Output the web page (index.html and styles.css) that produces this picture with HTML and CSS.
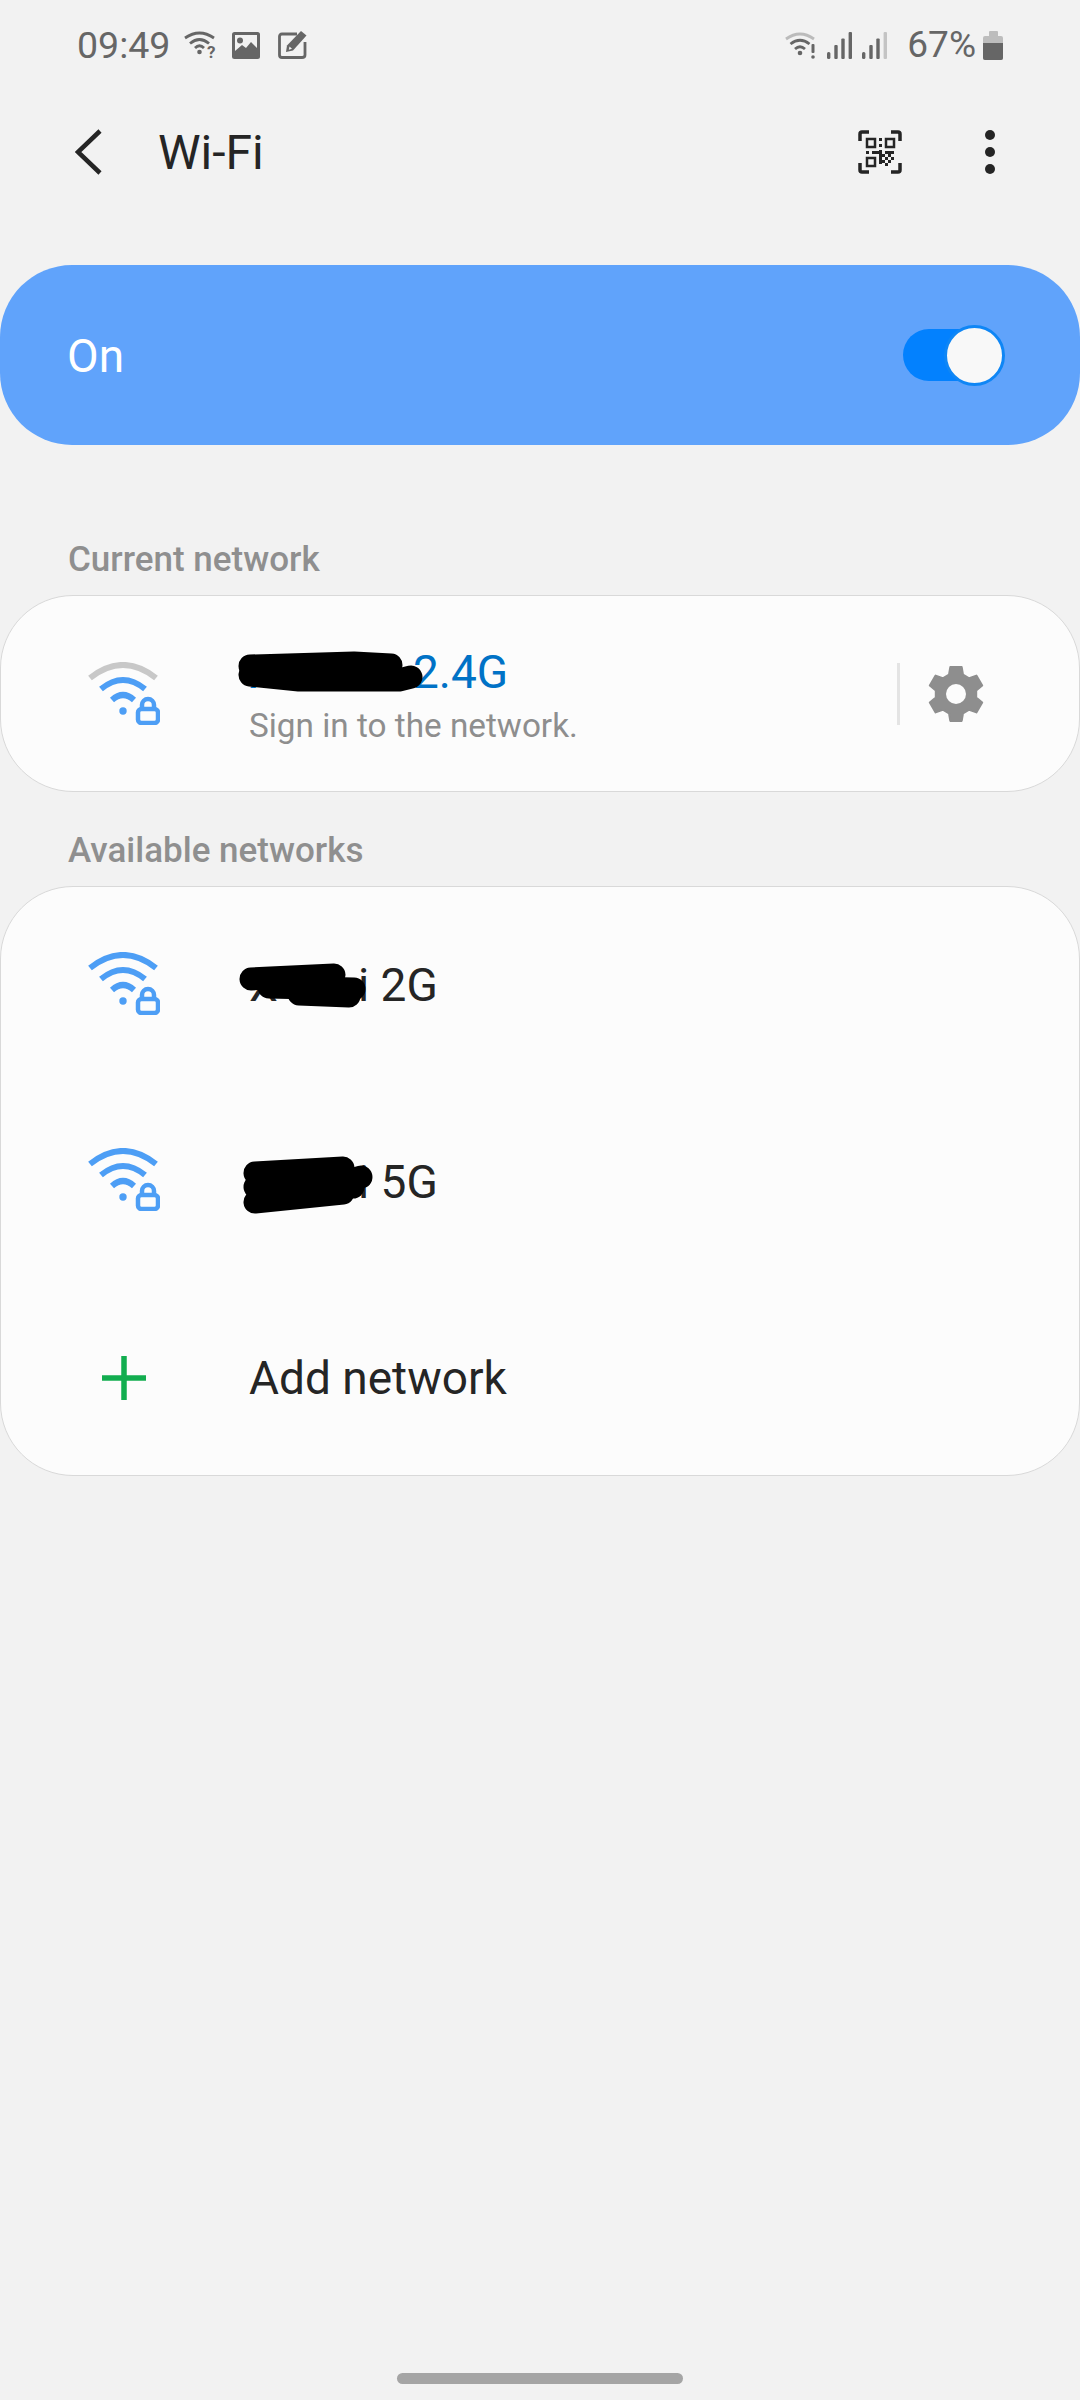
FILE: index.html
```html
<!DOCTYPE html>
<html lang="en">
<head>
    <meta charset="UTF-8">
    <meta name="viewport" content="width=device-width, initial-scale=1.0">
    <title>Wi-Fi</title>
    <link rel="stylesheet" href="styles.css">
</head>
<body>
    <svg class="defs" width="0" height="0" aria-hidden="true">
        <defs>
            <g id="wifi-inner">
                <path class="arc" d="M13 27 Q35 9 57 27"/>
                <path class="arc" d="M24 38 Q35 28 46 38"/>
                <circle class="dot" cx="35" cy="49" r="3.7"/>
                <rect class="lock" x="50" y="47" width="20" height="14" rx="3.5"/>
                <path class="shackle" d="M54 47 v-4 a6 6 0 0 1 12 0 v4"/>
            </g>
        </defs>
    </svg>

    <div class="status-bar">
        <span class="status-text time">09:49</span>
        <svg class="st-wifi-q" width="32" height="28" viewBox="0 0 32 28">
            <path class="st-line" d="M1 7 Q15.5 -3 30 7"/>
            <path class="st-line" d="M6 12.5 Q15.5 4.5 25 12.5"/>
            <path class="st-line" d="M11 17 Q15.5 12.500 20 17"/>
            <circle class="st-fill" cx="15.500" cy="21" r="2.300"/>
            <text class="st-mark" x="23" y="27">?</text>
        </svg>
        <svg class="st-image" width="28" height="27" viewBox="0 0 28 27">
            <rect class="st-fill" width="28" height="27" rx="2.500"/>
            <rect class="st-hole" x="3" y="3" width="22" height="18"/>
            <circle class="st-fill" cx="8" cy="8.500" r="3"/>
            <path class="st-fill" d="M3 19 L10 13 L14 16 L19 10 L25 16 V24 H3 Z"/>
        </svg>
        <svg class="st-edit" width="29" height="28" viewBox="0 0 29 28">
            <path class="st-line" d="M19 3 H4 Q1.500 3 1.500 5.500 V24 Q1.500 26.500 4 26.500 H24 Q27 26.500 27 24 V11"/>
            <path class="st-fill" d="M23 0 L28.500 4.500 L15 19.500 L8 21 L9 14.500 Z"/>
            <path class="st-hole" d="M11.500 15.500 L14 17.800 L10.800 18.700 Z"/>
        </svg>

        <div class="status-right">
            <svg class="st-wifi-x" width="31" height="27" viewBox="0 0 31 27">
                <path class="st-line st-light" d="M1 7 Q15 -3 29 7"/>
                <path class="st-line" d="M5.500 12 Q15 4.500 24.500 12"/>
                <path class="st-line" d="M10 17 Q15 12.500 20 17"/>
                <circle class="st-fill" cx="15" cy="21" r="2.300"/>
                <rect class="st-fill" x="26.500" y="12" width="3" height="9" rx="1"/>
                <circle class="st-fill" cx="28" cy="25" r="1.800"/>
            </svg>
            <svg class="st-signal" width="25" height="27" viewBox="0 0 25 27">
                <rect class="st-fill" x="0" y="20" width="3.400" height="7" rx="1.500"/>
                <rect class="st-fill" x="7.300" y="13" width="3.400" height="14" rx="1"/>
                <rect class="st-fill" x="14.300" y="6.500" width="3.400" height="20.500" rx="1"/>
                <rect class="st-fill" x="21.600" y="0" width="3.400" height="27" rx="1"/>
            </svg>
            <svg class="st-signal-2" width="25" height="27" viewBox="0 0 25 27">
                <rect class="st-fill" x="0" y="20" width="3.400" height="7" rx="1.500"/>
                <rect class="st-fill" x="7.300" y="13" width="3.400" height="14" rx="1"/>
                <rect class="st-fill" x="14.300" y="6.500" width="3.400" height="20.500" rx="1"/>
                <rect class="st-dim" x="21.600" y="0" width="3.400" height="27" rx="1"/>
            </svg>
            <span class="status-text percent">67%</span>
            <div class="battery">
                <div class="battery-cap"></div>
                <div class="battery-body"><div class="battery-level"></div></div>
            </div>
        </div>
    </div>

    <header class="app-bar">
        <svg class="back-icon" width="28" height="46" viewBox="0 0 28 46">
            <path d="M25 2 L3 23 L25 44"/>
        </svg>
        <h1 class="title">Wi-Fi</h1>
        <svg class="qr-icon" width="44" height="44" viewBox="0 0 44 44">
            <path class="qr-corner" d="M2 11 V4 Q2 2 4 2 H11 M33 2 H40 Q42 2 42 4 V11 M2 33 V40 Q2 42 4 42 H11 M33 42 H40 Q42 42 42 40 V33"/>
            <rect class="qr-box" x="9" y="9" width="8" height="8"/>
            <rect class="qr-box" x="28" y="9" width="8" height="8"/>
            <rect class="qr-box" x="9" y="28" width="8" height="8"/>
            <path class="qr-bits" d="M21 8h3v3h-3z M21 14h3v3h-3z M8 21h3v3h-3z M14 21h7v3h-7z M21 20h3v14h-3z M27 21h9v3h-9z M24 24h3v3h-3z M27 27h3v3h-3z M30 24h3v3h-3z M33 27h3v3h-3z M24 30h3v3h-3z M30 30h3v3h-3z M27 33h3v3h-3z"/>
        </svg>
        <div class="more-icon"><span></span><span></span><span></span></div>
    </header>

    <section class="master-switch">
        <span class="master-label">On</span>
        <div class="toggle">
            <div class="toggle-track"></div>
            <div class="toggle-knob"></div>
        </div>
    </section>

    <h2 class="section-title first">Current network</h2>
    <section class="card">
        <div class="row current">
            <div class="row-icon">
                <svg class="wifi" width="72" height="63" viewBox="0 0 72 63">
                    <path class="arc-off" d="M2 16 Q35 -10 68 16"/>
                    <use href="#wifi-inner"/>
                </svg>
            </div>
            <div class="row-text">
                <div class="ssid ssid-active"><span class="masked gap-current">X</span>2.4G
                    <svg class="scribble scribble-current" width="186" height="41" viewBox="0 0 186 41">
                        <path d="M11 13 L115 10 L152 12"/>
                        <path d="M11 22 L60 27 L160 27 L172 24"/>
                    </svg>
                </div>
                <div class="sub">Sign in to the network.</div>
            </div>
            <div class="divider"></div>
            <svg class="gear" width="58" height="58" viewBox="-29 -29 58 58">
                <path class="gear-body" d="M-7 -19.300 L-5.700 -26.900 L5.700 -26.900 L7 -19.300 L13.200 -15.700 L20.400 -18.400 L26.200 -8.500 L20.200 -3.600 L20.200 3.600 L26.200 8.500 L20.400 18.400 L13.200 15.700 L7 19.300 L5.700 26.900 L-5.700 26.900 L-7 19.300 L-13.200 15.700 L-20.400 18.400 L-26.200 8.500 L-20.200 3.600 L-20.200 -3.600 L-26.200 -8.500 L-20.400 -18.400 L-13.200 -15.700 Z"/>
                <circle class="gear-hole" r="10"/>
            </svg>
        </div>
    </section>

    <h2 class="section-title second">Available networks</h2>
    <section class="card">
        <div class="row">
            <div class="row-icon">
                <svg class="wifi wifi-list" width="72" height="63" viewBox="0 0 72 63">
                    <path class="arc" d="M2 16 Q35 -10 68 16"/>
                    <use href="#wifi-inner"/>
                </svg>
            </div>
            <div class="ssid"><span class="masked gap-2g">X</span>i 2G
                <svg class="scribble scribble-2g" width="130" height="49" viewBox="0 0 130 49">
                    <path d="M12 17 L95 13"/>
                    <path d="M30 25 L115 27"/>
                    <path d="M60 32 L110 34"/>
                </svg>
            </div>
        </div>
        <div class="row">
            <div class="row-icon">
                <svg class="wifi wifi-list" width="72" height="63" viewBox="0 0 72 63">
                    <path class="arc" d="M2 16 Q35 -10 68 16"/>
                    <use href="#wifi-inner"/>
                </svg>
            </div>
            <div class="ssid"><span class="masked gap-5g">X</span>i 5G
                <svg class="scribble scribble-5g" width="135" height="61" viewBox="0 0 135 61">
                    <path d="M12 16 L100 11"/>
                    <path d="M118 20 L100 25"/>
                    <path d="M12 30 L110 30"/>
                    <path d="M12 45 L100 36"/>
                </svg>
            </div>
        </div>
        <div class="row add">
            <div class="row-icon">
                <svg class="plus" width="44" height="44" viewBox="0 0 44 44">
                    <path d="M22 0 V44 M0 22 H44"/>
                </svg>
            </div>
            <div class="ssid">Add network</div>
        </div>
    </section>

    <div class="home-bar"></div>
</body>
</html>
```

FILE: styles.css
```css
body {
    font-family: Roboto, "Noto Sans", sans-serif;
    background-color: #f2f2f2;
    margin: 0;
    width: 1080px;
    height: 2400px;
    display: flex;
    flex-direction: column;
    color: #252525;
    overflow: hidden;
}

.defs {
    position: absolute;
}

/* status bar */
.status-bar {
    display: flex;
    align-items: center;
    height: 48px;
    margin-top: 21px;
    padding: 0 77px;
}

.status-text {
    font-size: 37.500px;
    line-height: 48px;
    color: #666;
}

.st-wifi-q {
    margin-left: 14px;
    overflow: visible;
}

.st-image {
    margin-left: 16px;
}

.st-edit {
    margin-left: 18px;
}

.status-right {
    display: flex;
    align-items: center;
    margin-left: auto;
}

.st-signal {
    margin-left: 11px;
}

.st-signal-2 {
    margin-left: 10px;
}

.percent {
    margin-left: 20px;
    font-size: 37px;
}

.st-line {
    fill: none;
    stroke: #666;
    stroke-width: 2.8;
}

.st-light {
    stroke: #bbb;
}

.st-fill {
    fill: #666;
}

.st-dim {
    fill: #c4c4c4;
}

.st-hole {
    fill: #f2f2f2;
}

.st-mark {
    font-family: Roboto, sans-serif;
    font-size: 17px;
    font-weight: 700;
    fill: #666;
}

.battery {
    display: flex;
    flex-direction: column;
    align-items: center;
    width: 20px;
    margin-left: 7px;
}

.battery-cap {
    width: 9px;
    height: 5px;
    background: #bdbdbd;
    border-radius: 1px 1px 0 0;
}

.battery-body {
    display: flex;
    align-items: flex-end;
    width: 20px;
    height: 24px;
    background: #bdbdbd;
    border-radius: 2px;
}

.battery-level {
    width: 100%;
    height: 17px;
    background: #666;
    border-radius: 0 0 2px 2px;
}

/* app bar */
.app-bar {
    display: flex;
    align-items: center;
    height: 88px;
    margin-top: 39px;
    padding-left: 75px;
}

.back-icon path {
    fill: none;
    stroke: #252525;
    stroke-width: 4.500;
}

.title {
    margin: 0 0 0 55px;
    font-size: 48px;
    font-weight: 400;
}

.qr-icon {
    margin-left: auto;
}

.qr-corner,
.qr-box {
    fill: none;
    stroke: #252525;
    stroke-width: 3.500;
}

.qr-box {
    stroke-width: 2.500;
}

.qr-bits {
    fill: #252525;
}

.more-icon {
    display: flex;
    flex-direction: column;
    gap: 7px;
    margin: 0 85px 0 83px;
}

.more-icon span {
    width: 10px;
    height: 10px;
    background: #252525;
    border-radius: 50%;
}

/* on/off card */
.master-switch {
    display: flex;
    align-items: center;
    justify-content: space-between;
    height: 180px;
    margin-top: 69px;
    padding: 0 75px 0 67px;
    background: #60a3fb;
    border-radius: 72px;
}

.master-label {
    position: relative;
    top: 1px;
    font-size: 46px;
    color: #fff;
}

.toggle {
    position: relative;
    width: 102px;
    height: 61px;
    display: flex;
    align-items: center;
}

.toggle-track {
    width: 90px;
    height: 52px;
    background: #0381fe;
    border-radius: 26px;
}

.toggle-knob {
    position: absolute;
    right: 0;
    top: 0;
    width: 61px;
    height: 61px;
    box-sizing: border-box;
    background: #f8f8f8;
    border: 3px solid #0f86f5;
    border-radius: 50%;
}

/* lists */
.section-title {
    margin: 0;
    padding-left: 68px;
    font-size: 35px;
    line-height: 40px;
    font-weight: 500;
    color: #8f8f8f;
}

.section-title.first {
    margin-top: 95px;
    margin-bottom: 15px;
}

.section-title.second {
    margin-top: 39px;
    margin-bottom: 15px;
}

.card {
    background: #fcfcfc;
    border: 1px solid #d9d9d9;
    border-radius: 73px;
}

.row {
    display: flex;
    align-items: center;
    height: 196.500px;
}

.row.current {
    height: 195px;
}

.row.add {
    height: 195px;
}

.row-icon {
    display: flex;
    justify-content: center;
    width: 72px;
    margin-left: 87px;
    margin-right: 89px;
}

.wifi-list {
    margin-bottom: 4px;
}

.ssid {
    position: relative;
    font-size: 46px;
    line-height: 52px;
    white-space: nowrap;
}

.ssid-active {
    color: #0072c6;
}

.masked {
    display: inline-block;
}

.gap-current {
    width: 164px;
}

.gap-2g {
    width: 109px;
}

.gap-5g {
    width: 109px;
}

/* marker strokes drawn over the network names */
.scribble {
    position: absolute;
    overflow: visible;
}

.scribble path {
    fill: none;
    stroke: #000;
    stroke-width: 23;
    stroke-linecap: round;
    stroke-linejoin: round;
}

.scribble-current {
    left: -10px;
    top: 7px;
}

.scribble-2g {
    left: -10px;
    top: 3px;
}

.scribble-5g {
    left: -6px;
    top: 1px;
}

.row-text {
    display: flex;
    flex-direction: column;
    flex: 1;
    padding-top: 8px;
}

.sub {
    margin-top: 5px;
    font-size: 33.300px;
    line-height: 46px;
    color: #8e8e8e;
}

.divider {
    width: 3px;
    height: 62px;
    background: #e4e4e4;
}

.gear {
    margin: 0 94px 0 27px;
}

.gear-body {
    fill: #8e8e8e;
    stroke: #8e8e8e;
    stroke-width: 2;
    stroke-linejoin: round;
}

.gear-hole {
    fill: #fcfcfc;
}

.arc,
.arc-off,
.shackle {
    fill: none;
    stroke: #4d9ef5;
    stroke-width: 6;
}

.arc-off {
    stroke: #c8c8c8;
}

.shackle {
    stroke-width: 4.500;
}

.dot {
    fill: #4d9ef5;
}

.lock {
    fill: #fcfcfc;
    stroke: #4d9ef5;
    stroke-width: 4.500;
}

.plus path {
    fill: none;
    stroke: #12ad4f;
    stroke-width: 5.500;
}

.home-bar {
    width: 286px;
    height: 11px;
    margin: auto auto 16px;
    background: #a5a5a5;
    border-radius: 6px;
}
```
